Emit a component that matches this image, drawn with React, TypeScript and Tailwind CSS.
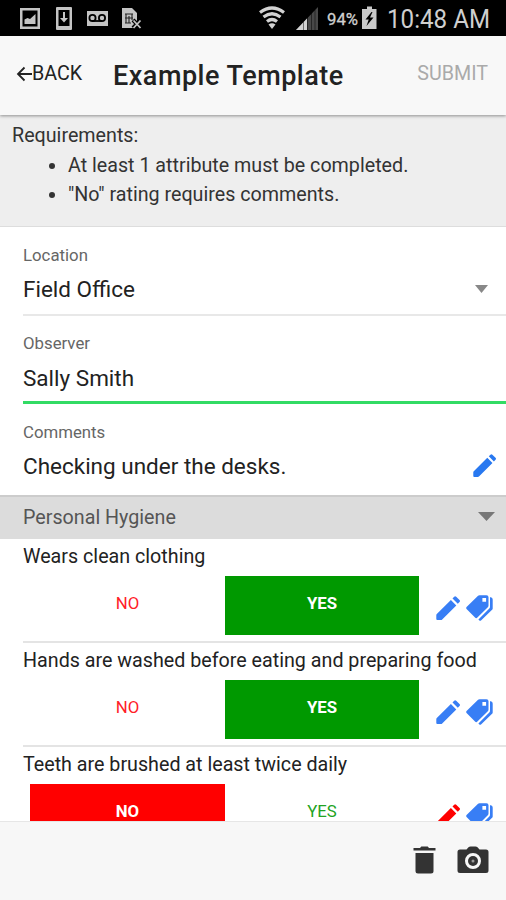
function StatusBar() {
  return (
    <div className="flex h-[36px] w-full shrink-0 bg-black">
      <svg width="506" height="36" viewBox="0 0 506 36" fill="none">
        <g fill="#c4c4c4">
          <path fillRule="evenodd" d="M20 8h20v21H20zM22.5 10.5v16h15v-16z" />
          <path d="M24.500 24v-4.500l3-1.500 2.500 1 5.500-5V24z" />
          <path fillRule="evenodd" d="M57 7h14q1 0 1 1v21q0 1-1 1H57q-1 0-1-1V8q0-1 1-1zM58.500 10v16h11V10z" />
          <path d="M63 12h2v6h3l-4 4.500-4-4.500h3z" />
          <path d="M87 11h21v15H87z" />
          <path d="M122 8h10l5 5v9l-3 6h-12z" />
        </g>
        <g stroke="#000" strokeWidth="1.800">
          <circle cx="92.500" cy="18" r="3.100" />
          <circle cx="102" cy="18" r="3.100" />
          <path d="M92 21h10" />
        </g>
        <path d="M125 14h8M125 23h6M126 14v9M129 16v7M132 14v6M125 18h8" stroke="#222" strokeWidth="1.100" />
        <path d="M133 20l8 8M141 20l-8 8" stroke="#000" strokeWidth="4" />
        <path d="M133.500 20.500l7 7.500M140.500 20.500l-7 7.500" stroke="#c4c4c4" strokeWidth="1.800" />
        <g stroke="#d2d2d2" strokeWidth="3.200">
          <path d="M260 12.500q12-9 24 0" />
          <path d="M263.500 17q8.500-6.500 17 0" />
          <path d="M267 21.500q5-4 10 0" />
        </g>
        <path d="M268.500 24.500q3.500-2.500 7 0L272 29z" fill="#d2d2d2" />
        <path d="M296 30l22-23v23z" fill="#484848" />
        <path d="M296 30l11-11.500V30z" fill="#d2d2d2" />
        <path d="M303.500 22v8M307.500 17v13M311.500 13v17M315 10v20" stroke="#000" strokeWidth=".8" opacity=".6" />
        <path d="M367 6.500h5V9h4.500v20H362V9h5z" fill="#c9c9c9" />
        <path d="M371.500 12l-6 7.500h3.200l-2.200 6.500 7-8.500H370l2.500-5.500z" fill="#000" />
        <g fill="#cfcfcf" fontFamily="Roboto, sans-serif">
          <text x="327" y="25" fontSize="17" textLength="31" lengthAdjust="spacingAndGlyphs" stroke="#cfcfcf" strokeWidth=".3">94%</text>
          <text x="387" y="28" fontSize="26" textLength="103" lengthAdjust="spacingAndGlyphs">10:48 AM</text>
        </g>
      </svg>
    </div>
  );
}

function Caret({ className }: { className: string }) {
  return (
    <svg className={className} viewBox="0 0 16 8" preserveAspectRatio="none">
      <path d="M0 0h16L8 8z" fill="currentColor" />
    </svg>
  );
}

function Pencil({ className }: { className: string }) {
  return (
    <svg className={className} viewBox="0 0 24 24" fill="currentColor">
      <path d="M.3 19.200Q.3 18.600.8 18.100L14.900 4l5.400 5.400L6.200 23.500q-.5.500-1.100.5H1.300q-1 0-1-1z" />
      <path d="M16.500 2.400L18.200.7q1-1 2 0l3.300 3.300q1 1 0 2l-1.700 1.700z" />
    </svg>
  );
}

function Tags({ className }: { className: string }) {
  return (
    <svg className={className} viewBox="0 0 27 26" fill="currentColor">
      <path fillRule="evenodd" d="M.8 11.700L11.800.9Q12.500.2 13.500.2h7q2 0 2 2v8.300q0 1-.7 1.700L11.400 22.600q-1.200 1.100-2.400 0L.8 14.200q-1.200-1.300 0-2.500zM16.400 3v3.700h3.700V3z" />
      <path d="M24 2.200h.8q1.900.4 1.900 2.200v9q0 .8-.6 1.400L15 25.400q-.8.700-1.600 0l-1-1L23.300 13.600q.7-.7.700-1.600z" />
    </svg>
  );
}

function Trash({ className }: { className: string }) {
  return (
    <svg className={className} viewBox="0 0 23 28" fill="currentColor">
      <path d="M.5 2H7l1.300-1.500h6.400L16 2h6.500v2.500H.500z" />
      <path d="M2.500 7h18v18q0 2.500-2.500 2.500H5Q2.500 27.500 2.500 25z" />
    </svg>
  );
}

function Camera({ className }: { className: string }) {
  return (
    <svg className={className} viewBox="0 0 32 28" fill="currentColor">
      <path fillRule="evenodd" d="M3 3.500h6.500l2-2.200q.8-.8 2-.8h5q1.200 0 2 .8l2 2.200H29q2.500 0 2.500 2.500v18.500q0 2.500-2.500 2.500H3Q.5 27 .5 24.500V6Q.5 3.500 3 3.500zM16 7a8 8 0 1 0 0 16a8 8 0 1 0 0-16z" />
      <circle cx="16" cy="15" r="5" />
      <circle cx="16" cy="15" r="1.500" fill="#999" />
    </svg>
  );
}

type Rating = { title: string; value: "no" | "yes" };

const ratings: Rating[] = [
  { title: "Wears clean clothing", value: "yes" },
  { title: "Hands are washed before eating and preparing food", value: "yes" },
  { title: "Teeth are brushed at least twice daily", value: "no" },
];

function RatingRow({ title, value }: Rating) {
  const no = value === "no";
  return (
    <div className="ml-[23px] h-[104px] shrink-0 border-b-2 border-[#e4e4e4]">
      <div className="h-[37px] pt-[5px] text-[19.7px] leading-[26px] whitespace-nowrap text-[#222]">{title}</div>
      <div className="flex h-[59px] pl-[7px]">
        <button className={`w-[195px] pb-[3px] text-[16.8px] ${no ? "bg-[#f00] font-bold text-white" : "text-[#ff2028]"}`}>NO</button>
        <button className={`w-[194px] pb-[3px] text-[16.8px] ${no ? "text-[#22a322]" : "bg-[#090] font-bold text-white"}`}>YES</button>
        <div className="flex gap-[6px] pt-[19px] pl-[17px]">
          <Pencil className={`mt-[1px] size-[24px] ${no ? "text-[#f00]" : "text-[#387ef5]"}`} />
          <Tags className="h-[26px] w-[27px] text-[#387ef5]" />
        </div>
      </div>
    </div>
  );
}

export default function App() {
  return (
    <div className="flex h-[900px] w-[506px] flex-col overflow-hidden bg-white font-[Roboto,sans-serif] text-[#222]">
      <StatusBar />
      <header className="z-10 flex h-[79px] shrink-0 items-center bg-[#f8f8f8] pr-[18px] pl-[16px] shadow-[0_1px_3px_rgba(0,0,0,0.4)]">
        <button className="flex w-[97px] items-center pb-[3px] text-[19.7px] text-[#222]">
          <svg className="h-[18px] w-[16px]" viewBox="0 0 16 18" fill="none" stroke="currentColor" strokeWidth="1.800">
            <path d="M8.500 2.500L2 9l6.500 6.500M2 9h14" />
          </svg>
          BACK
        </button>
        <h1 className="pt-[1px] text-[27px] font-medium tracking-[0.5px] whitespace-nowrap">Example Template</h1>
        <button className="ml-auto pb-[3px] text-[19.7px] text-[#aaa]">SUBMIT</button>
      </header>

      <section className="h-[112px] shrink-0 border-b border-[#ddd] bg-[#eee] pt-[6px] pl-[12px] text-[19.7px] leading-[29.500px] text-[#333]">
        <p>Requirements:</p>
        <ul className="list-disc pl-[56px]">
          <li>At least 1 attribute must be completed.</li>
          <li>"No" rating requires comments.</li>
        </ul>
      </section>

      <section className="ml-[23px] flex h-[89px] shrink-0 border-b-2 border-[#e8e8e8]">
        <div className="pt-[17px]">
          <div className="text-[16.8px] leading-[22px] text-[#666]">Location</div>
          <div className="pt-[9px] text-[22.500px] leading-[28px]">Field Office</div>
        </div>
        <Caret className="mt-[58px] mr-[18px] ml-auto h-[8px] w-[13px] text-[#888]" />
      </section>
      <section className="ml-[23px] h-[88px] shrink-0 border-b-[3px] border-[#32db64] pt-[16px]">
        <div className="text-[16.8px] leading-[22px] text-[#666]">Observer</div>
        <div className="pt-[10px] text-[22.500px] leading-[28px]">Sally Smith</div>
      </section>
      <section className="ml-[23px] flex h-[91px] shrink-0">
        <div className="pt-[17px]">
          <div className="text-[16.8px] leading-[22px] text-[#666]">Comments</div>
          <div className="pt-[9px] text-[22.500px] leading-[28px]">Checking under the desks.</div>
        </div>
        <Pencil className="mt-[50px] mr-[10px] ml-auto size-[23px] text-[#2878f0]" />
      </section>

      <section className="flex h-[44px] shrink-0 items-center border-t-2 border-[#ccc] bg-[#dcdcdc] pr-[11px] pl-[23px] text-[19.7px] text-[#555]">
        Personal Hygiene
        <Caret className="mb-[4px] ml-auto h-[9px] w-[17px] text-[#777]" />
      </section>

      <main className="min-h-0 flex-1 overflow-hidden">
        {ratings.map((r) => (
          <RatingRow key={r.title} {...r} />
        ))}
      </main>

      <footer className="flex h-[79px] shrink-0 items-start justify-end border-t border-[#e6e6e6] bg-[#f7f7f7] pt-[24px] pr-[17px] text-[#333]">
        <Trash className="mr-[21px] h-[28px] w-[23px]" />
        <Camera className="h-[28px] w-[32px]" />
      </footer>
    </div>
  );
}
